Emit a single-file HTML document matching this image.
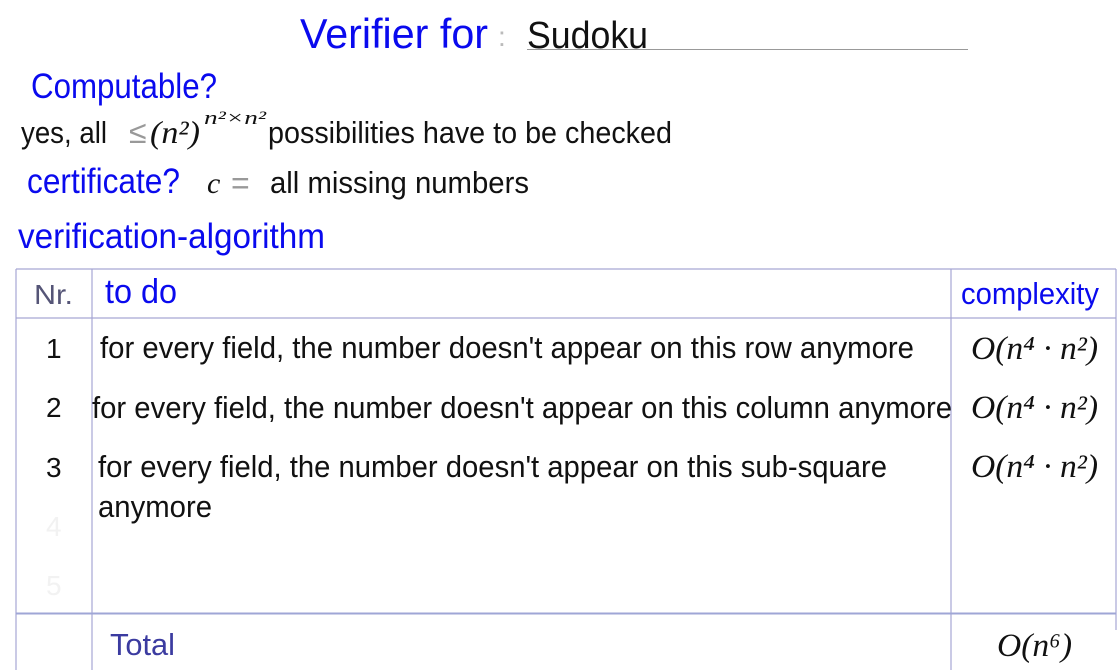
<!DOCTYPE html>
<html><head><meta charset="utf-8"><style>
html,body{margin:0;padding:0;background:#fff;width:1120px;height:670px;overflow:hidden}
svg{display:block}
text{font-family:"Liberation Sans",sans-serif}
.b{fill:#0a0aee}
.k{fill:#111}
.m{font-family:"Liberation Serif",serif;font-style:italic;fill:#111}
.g{fill:#999}
</style></head><body>
<svg width="1120" height="670" viewBox="0 0 1120 670" xmlns="http://www.w3.org/2000/svg">
<text x="300" y="48" font-size="42" class="b" textLength="188" lengthAdjust="spacingAndGlyphs">Verifier for</text>
<text x="498" y="46" font-size="28" fill="#bbb">:</text>
<text x="527" y="48" font-size="38" class="k" textLength="121" lengthAdjust="spacingAndGlyphs">Sudoku</text>
<line x1="527" y1="49.5" x2="968" y2="49.5" stroke="#999" stroke-width="1"/>

<text x="31" y="98" font-size="35" class="b" textLength="186" lengthAdjust="spacingAndGlyphs">Computable?</text>
<text x="21" y="143" font-size="31" class="k" textLength="86" lengthAdjust="spacingAndGlyphs">yes, all</text>
<text x="129" y="143" font-size="32" class="g">≤</text>
<text x="150" y="143" font-size="32" class="m" textLength="50" lengthAdjust="spacingAndGlyphs">(n²)</text>
<text x="204" y="124" font-size="19" class="m" textLength="62" lengthAdjust="spacingAndGlyphs">n²×n²</text>
<text x="268" y="143" font-size="31" class="k" textLength="404" lengthAdjust="spacingAndGlyphs">possibilities have to be checked</text>

<text x="27" y="193" font-size="35" class="b" textLength="153" lengthAdjust="spacingAndGlyphs">certificate?</text>
<text x="207" y="193" font-size="30" class="m">c</text>
<text x="231" y="194" font-size="32" class="g">=</text>
<text x="270" y="193" font-size="31" class="k" textLength="259" lengthAdjust="spacingAndGlyphs">all missing numbers</text>

<text x="18" y="248" font-size="35" class="b" textLength="307" lengthAdjust="spacingAndGlyphs">verification-algorithm</text>

<g stroke="#a6a6d4" stroke-width="1.2" fill="none">
<line x1="16" y1="269" x2="1116" y2="269"/>
<line x1="16" y1="318" x2="1116" y2="318"/>
<line x1="16" y1="269" x2="16" y2="670"/>
<line x1="92" y1="269" x2="92" y2="670"/>
<line x1="951" y1="269" x2="951" y2="670"/>
<line x1="1116" y1="269" x2="1116" y2="630"/>
<line x1="16" y1="613.5" x2="1116" y2="613.5" stroke-width="2" stroke="#9fa6d6"/>
</g>

<text x="34" y="304" font-size="28" fill="#555577" textLength="39" lengthAdjust="spacingAndGlyphs">Nr.</text>
<text x="105" y="303" font-size="34" class="b" textLength="72" lengthAdjust="spacingAndGlyphs">to do</text>
<text x="961" y="304" font-size="31" class="b" textLength="138" lengthAdjust="spacingAndGlyphs">complexity</text>

<text x="46" y="358" font-size="28" class="k">1</text>
<text x="100" y="358" font-size="31" class="k" textLength="814" lengthAdjust="spacingAndGlyphs">for every field, the number doesn't appear on this row anymore</text>
<text x="971" y="359" font-size="33" class="m" textLength="127" lengthAdjust="spacingAndGlyphs">O(n⁴ · n²)</text>

<text x="46" y="417" font-size="28" class="k">2</text>
<text x="92" y="418" font-size="31" class="k" textLength="860" lengthAdjust="spacingAndGlyphs">for every field, the number doesn't appear on this column anymore</text>
<text x="971" y="418" font-size="33" class="m" textLength="127" lengthAdjust="spacingAndGlyphs">O(n⁴ · n²)</text>

<text x="46" y="477" font-size="28" class="k">3</text>
<text x="98" y="477" font-size="31" class="k" textLength="789" lengthAdjust="spacingAndGlyphs">for every field, the number doesn't appear on this sub-square</text>
<text x="98" y="517" font-size="31" class="k" textLength="114" lengthAdjust="spacingAndGlyphs">anymore</text>
<text x="971" y="477" font-size="33" class="m" textLength="127" lengthAdjust="spacingAndGlyphs">O(n⁴ · n²)</text>

<text x="46" y="536" font-size="28" fill="#f2f2f2">4</text>
<text x="46" y="595" font-size="28" fill="#f2f2f2">5</text>

<text x="110" y="655" font-size="31" fill="#3b3ba0" textLength="65" lengthAdjust="spacingAndGlyphs">Total</text>
<text x="997" y="656" font-size="33" class="m" textLength="75" lengthAdjust="spacingAndGlyphs">O(n⁶)</text>
</svg>
</body></html>
